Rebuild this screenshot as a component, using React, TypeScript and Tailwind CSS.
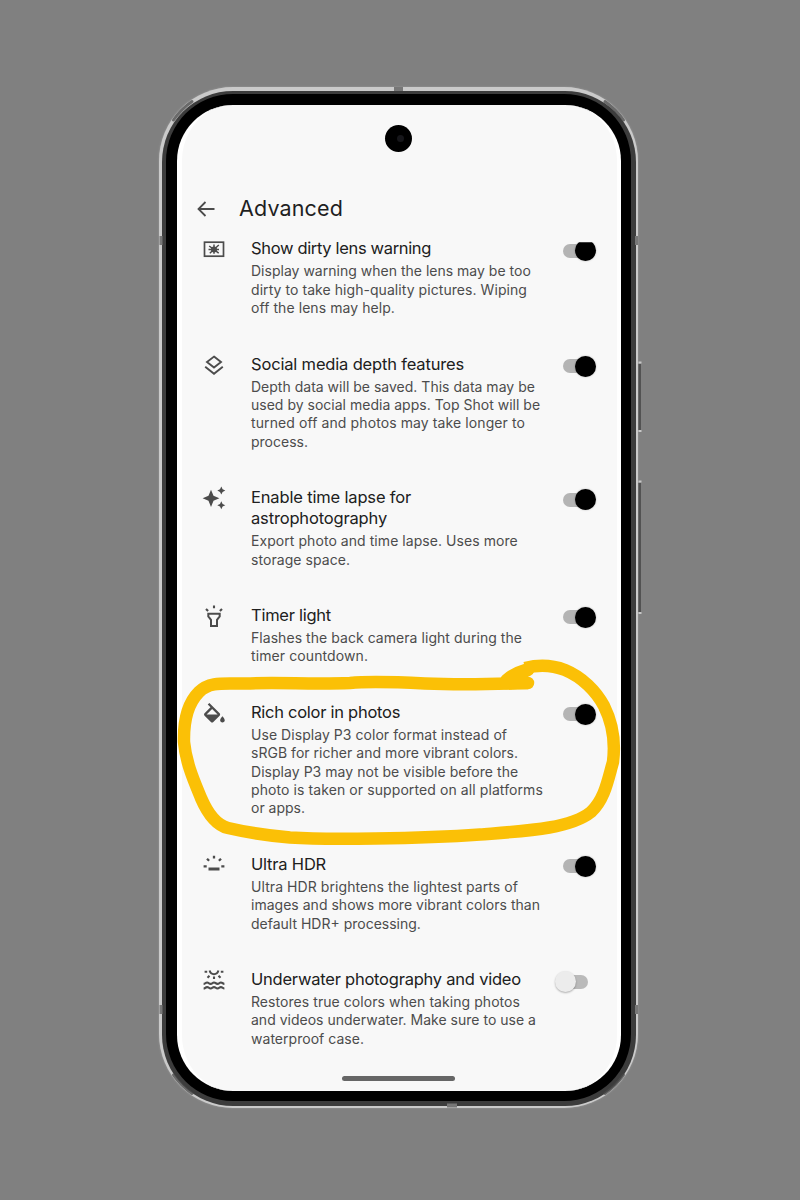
import type { ReactNode } from "react";

type Line = [text: string, tracking: string];

interface Setting {
  icon: ReactNode;
  title: Line[];
  body: Line[];
  on: boolean;
}

function Icon({ children }: { children: ReactNode }) {
  return (
    <svg viewBox="0 0 24 24" className="h-6 w-6 shrink-0" fill="none" stroke="#4c4c4c" strokeWidth="2">
      {children}
    </svg>
  );
}

const dirtyLens = (
  <Icon>
    <rect x="2.5" y="5.2" width="19" height="14" strokeWidth="1.7" />
    <path d="M12 7.6v9.200M7.2 9l9.500 7.200M16.8 8l-9 8.2M6.500 12.6h10.500" strokeWidth="1.5" />
    <circle cx="12" cy="12.4" r="3" fill="#4c4c4c" stroke="none" />
  </Icon>
);

const layers = (
  <Icon>
    <path d="M12 3.6l7 5.5-7 5.5-7-5.5z" strokeWidth="1.9" />
    <path d="M3.2 13.7l8.8 7 8.8-7" strokeWidth="1.9" />
  </Icon>
);

const sparkle = (
  <Icon>
    <g fill="#4c4c4c" stroke="none">
      <path d="M9 3.800l2.500 6 5.900 2.400-5.900 2.500L9 20.900l-2.500-6.200L.6 12.200l5.900-2.400z" />
      <path d="M19.300.6l1.300 2.700 2.700 1.300-2.700 1.300-1.300 2.700-1.300-2.700-2.700-1.300 2.700-1.300z" />
      <path d="M19.300 15.200l1.300 2.700 2.700 1.300-2.700 1.300-1.300 2.700-1.300-2.700-2.700-1.300 2.700-1.300z" />
    </g>
  </Icon>
);

const flashlight = (
  <Icon>
    <path d="M6.300 9.800h11.400v2.600l-2.700 3.500v6H9v-6l-2.700-3.500z" strokeWidth="2" />
    <path d="M12 1.500v2.800M4 4.900l2.100 2.100M20 4.900l-2.100 2.100" strokeWidth="2.100" />
  </Icon>
);

const paint = (
  <Icon>
    <path
      d="M16.560 8.940L7.620 0 6.210 1.410l2.380 2.380-5.150 5.150c-.59.59-.59 1.540 0 2.120l5.500 5.500c.29.29.68.44 1.060.44s.77-.15 1.060-.44l5.500-5.500c.59-.58.59-1.530 0-2.120zM5.210 10L10 5.210 14.790 10H5.210zM19 11.500s-2 2.170-2 3.500c0 1.100.9 2 2 2s2-.9 2-2c0-1.330-2-3.500-2-3.500z"
      fill="#4c4c4c"
      stroke="none"
      transform="translate(-1.400 2) scale(1.150)"
    />
  </Icon>
);

const hdr = (
  <Icon>
    <path d="M6.500 16h11" strokeWidth="3" />
    <path d="M12 2.800v2.800M5 5.700l2.100 2.100M19 5.700l-2.100 2.100M1.600 13.300h3.100M19.300 13.300h3.100" strokeWidth="2.300" />
  </Icon>
);

const underwater = (
  <Icon>
    <path d="M7.600 2.600c.6 2.300 2.200 3.600 4.400 3.600s3.800-1.300 4.400-3.600" strokeWidth="2" />
    <path d="M2.600 3.800h2.600M18.800 3.800h2.600M12 8.500v2.600M5.500 9.700l2-2M18.500 9.700l-2-2" strokeWidth="2.100" />
    <path
      d="M1.600 15.900c1.700 0 1.700-1.400 3.500-1.400s1.700 1.400 3.500 1.400 1.700-1.400 3.400-1.400 1.700 1.400 3.500 1.400 1.700-1.400 3.400-1.400 1.700 1.400 3.500 1.400M1.600 20.500c1.700 0 1.700-1.400 3.500-1.400s1.700 1.400 3.500 1.400 1.700-1.400 3.400-1.400 1.700 1.400 3.500 1.400 1.700-1.400 3.400-1.400 1.700 1.400 3.500 1.400"
      strokeWidth="2.100"
    />
  </Icon>
);

const settings: Setting[] = [
  {
    icon: dirtyLens,
    title: [["Show dirty lens warning", "tracking-[-0.34px]"]],
    body: [
      ["Display warning when the lens may be too", "tracking-[0.01px]"],
      ["dirty to take high-quality pictures. Wiping", "tracking-[0.06px]"],
      ["off the lens may help.", "tracking-[0.07px]"],
    ],
    on: true,
  },
  {
    icon: layers,
    title: [["Social media depth features", "tracking-[-0.17px]"]],
    body: [
      ["Depth data will be saved. This data may be", "tracking-[0.01px]"],
      ["used by social media apps. Top Shot will be", "tracking-[0.01px]"],
      ["turned off and photos may take longer to", "tracking-[0.1px]"],
      ["process.", "tracking-[0px]"],
    ],
    on: true,
  },
  {
    icon: sparkle,
    title: [
      ["Enable time lapse for", "tracking-[-0.16px]"],
      ["astrophotography", "tracking-[-0.16px]"],
    ],
    body: [
      ["Export photo and time lapse. Uses more", "tracking-[0.06px]"],
      ["storage space.", "tracking-[0.06px]"],
    ],
    on: true,
  },
  {
    icon: flashlight,
    title: [["Timer light", "tracking-[-0.26px]"]],
    body: [
      ["Flashes the back camera light during the", "tracking-[0.05px]"],
      ["timer countdown.", "tracking-[0.1px]"],
    ],
    on: true,
  },
  {
    icon: paint,
    title: [["Rich color in photos", "tracking-[-0.27px]"]],
    body: [
      ["Use Display P3 color format instead of", "tracking-[0.05px]"],
      ["sRGB for richer and more vibrant colors.", "tracking-[0.03px]"],
      ["Display P3 may not be visible before the", "tracking-[0.04px]"],
      ["photo is taken or supported on all platforms", "tracking-[0.09px]"],
      ["or apps.", "tracking-[0px]"],
    ],
    on: true,
  },
  {
    icon: hdr,
    title: [["Ultra HDR", "tracking-[-0.2px]"]],
    body: [
      ["Ultra HDR brightens the lightest parts of", "tracking-[0.07px]"],
      ["images and shows more vibrant colors than", "tracking-[0.02px]"],
      ["default HDR+ processing.", "tracking-[0px]"],
    ],
    on: true,
  },
  {
    icon: underwater,
    title: [["Underwater photography and video", "tracking-[-0.23px]"]],
    body: [
      ["Restores true colors when taking photos", "tracking-[0.06px]"],
      ["and videos underwater. Make sure to use a", "tracking-[0.01px]"],
      ["waterproof case.", "tracking-[0.03px]"],
    ],
    on: false,
  },
];

function Toggle({ on }: { on: boolean }) {
  return on ? (
    <div className="mt-[2px] ml-auto flex h-[21px] w-[34px] items-center">
      <div className="h-[14px] w-6 rounded-full bg-[#b4b4b4]" />
      <div className="-ml-[12px] h-[21px] w-[21px] shrink-0 rounded-full bg-black shadow-[0_0_2px_rgba(0,0,0,0.3)]" />
    </div>
  ) : (
    <div className="mt-[2px] mr-[8px] ml-auto flex h-[21px] w-[34px] items-center">
      <div className="z-10 h-[21px] w-[21px] shrink-0 rounded-full bg-[#ececec] shadow-[0_1px_2px_rgba(0,0,0,0.3)]" />
      <div className="-ml-[12px] h-[14px] w-6 rounded-full bg-[#bababa]" />
    </div>
  );
}

function Row({ item, clipped }: { item: Setting; clipped: boolean }) {
  return (
    <div className="flex pr-[24px] pb-9 pl-[24.500px]">
      <div className="-mt-px">{item.icon}</div>
      <div className="ml-[25.500px] w-[300px] shrink-0">
        {item.title.map(([text, tracking]) => (
          <p key={text} className={`text-[16.500px] leading-[21px] whitespace-nowrap text-[#202020] ${tracking}`}>
            {text}
          </p>
        ))}
        <div className="mt-[3px]">
          {item.body.map(([text, tracking]) => (
            <p key={text} className={`text-[14px] leading-[18.400px] whitespace-nowrap text-[#4c4c4c] ${tracking}`}>
              {text}
            </p>
          ))}
        </div>
      </div>
      <div className={clipped ? "ml-auto [clip-path:inset(4px_-3px_-3px_-3px)]" : "ml-auto"}>
        <Toggle on={item.on} />
      </div>
    </div>
  );
}

export default function App() {
  return (
    <div className="relative h-[1200px] w-[800px] overflow-hidden bg-[#808080] pt-[87px] pl-[159px] font-['Inter',sans-serif]">
      <div className="h-[1021px] w-[479px] rounded-[74px] bg-[#cacaca] p-[2.500px] pt-[4px] shadow-[0_0_2px_#a0a0a0]">
        <div className="h-full rounded-[71px] bg-[#3c3c3c] pt-[3px] pr-[5px] pb-[5px] pl-[4px]">
          <div className="h-full rounded-[67px] bg-black pt-[11px] pr-[10px] pb-[10px] pl-[11.500px]">
            <div className="flex h-full flex-col overflow-hidden rounded-[56px] border-r-[4px] border-l-[5px] border-white bg-[#f8f8f8]">
              <div className="-ml-[5px] flex h-[133.300px] shrink-0 flex-col">
                <div className="ml-[208px] mt-5 flex h-[27px] w-[27px] shrink-0 items-center justify-center rounded-full bg-black">
                  <div className="ml-1 h-[7px] w-[7px] rounded-full bg-[#16161a]" />
                </div>
                <div className="mt-[40.500px] flex h-8 shrink-0 items-center pl-[19.500px]">
                  <svg viewBox="0 0 18 16" className="h-4 w-[18px]" fill="none" stroke="#4c4c4c" strokeWidth="1.800">
                    <path d="M8.500 1L1.500 8l7 7M1.500 8H17.500" />
                  </svg>
                  <h1 className="ml-[24.500px] text-[21.500px] tracking-[0.150px] text-[#1f1f1f]">Advanced</h1>
                </div>
              </div>
              <div className="-mr-[4px] -ml-[5px] min-h-0 flex-1">
                {settings.map((item, i) => (
                  <Row key={item.title[0][0]} item={item} clipped={i === 0} />
                ))}
              </div>
              <div className="mb-[10px] ml-[160px] h-[4.500px] w-[113px] shrink-0 rounded-full bg-[#666]" />
            </div>
          </div>
        </div>
      </div>

      {/* Frame shading, antenna bands, side keys and the marker stroke */}
      <svg viewBox="0 0 800 1200" className="pointer-events-none absolute inset-0 h-full w-full" fill="none">
        <g stroke="#4a4a4a" strokeWidth="3" strokeLinecap="round" strokeOpacity="0.75">
          <path d="M173.500 120A73 73 0 0 1 192 101.500" />
          <path d="M623.500 120A73 73 0 0 0 605 101.500" />
          <path d="M173.500 1075A73 73 0 0 0 192 1093.500" />
          <path d="M623.500 1075A73 73 0 0 1 605 1093.500" />
        </g>
        <path d="M394 89H403M447 1105.500H457" stroke="#777" strokeWidth="4" />
        <path d="M161 236v9M161 1005v9M636.500 236v9M636.500 1005v9" stroke="#777" strokeWidth="3" />
        <path d="M639.700 364v66M639.700 483v129" stroke="#505050" strokeWidth="2.500" />
        <path d="M638.500 362.500h3M638.500 431h3M638.500 481.500h3M638.500 613h3" stroke="#c8c8c8" strokeWidth="2" />
        <path
          d="M528 683C500 684 460 685 425 683.500C395 682 370 681 350 683C310 684.500 280 682 245 683.500C225 684 210 681 199 692C188 703 183.500 721 184 742C186 763 194 781 201 798C207 812 216 825 228 828C245 832 262 835 290 837.500C320 839.500 350 839 375 838.500C410 838 445 837 480 834.500C525 831 570 829 591 812C605 799 608 779 613 762C615.500 742 612 722 604 706C596 691 582 677 565 670C552 665 537 665 525 668"
          stroke="#fbc006"
          strokeWidth="12.500"
          strokeLinejoin="round"
        />
        <path d="M545 665.500C528 666 514 671 505 679" stroke="#fbc006" strokeWidth="9" strokeLinecap="round" />
        <path d="M506 683H528M510 679L528 670" stroke="#fbc006" strokeWidth="12.500" strokeLinecap="round" />
      </svg>
    </div>
  );
}
